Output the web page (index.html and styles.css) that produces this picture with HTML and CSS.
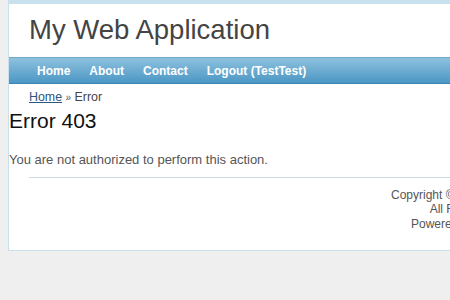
FILE: index.html
```html
<!DOCTYPE html>
<html lang="en">
<head>
  <meta charset="UTF-8" />
  <title>My Web Application - Error</title>
  <link rel="stylesheet" href="styles.css">
</head>
<body>
  <div class="page">
    <div class="header">
      <div class="logo">My Web Application</div>
    </div>

    <div class="mainmenu">
      <ul>
        <li><a href="#">Home</a></li>
        <li><a href="#">About</a></li>
        <li><a href="#">Contact</a></li>
        <li><a href="#">Logout (TestTest)</a></li>
      </ul>
    </div>

    <div class="breadcrumbs">
      <a href="#">Home</a> <span class="sep">&raquo;</span> <span>Error</span>
    </div>

    <h2>Error 403</h2>
    <div class="error">You are not authorized to perform this action.</div>

    <div class="footer">
      Copyright &copy; 2012 by My Company.<br/>
      All Rights Reserved.<br/>
      Powered by <a href="#">Yii Framework</a>.
    </div>
  </div>
</body>
</html>
```

FILE: styles.css
```css
html {
  overflow: hidden;
}

body {
  margin: 0;
  background: #efefef;
  color: #555;
  font: normal 12px 'Liberation Sans', Arial, sans-serif;
}

.page {
  width: 950px;
  margin: 0 0 0 8px;
  background: #fff;
  border: 1px solid #c9e0ed;
}

.header {
  border-top: 3px solid #c9e0ed;
}

.logo {
  padding: 9px 20px 11px;
  font-size: 27.5px;
  line-height: 33px;
  color: #444;
}

.mainmenu {
  height: 25px;
  border-top: 1px solid #72a8ca;
  border-bottom: 1px solid #3f84b0;
  background: linear-gradient(#8ec1de, #4b97c5);
}

.mainmenu ul {
  display: flex;
  gap: 3px;
  list-style: none;
  margin: 0;
  padding: 0 20px;
  height: 100%;
  align-items: center;
}

.mainmenu a {
  display: block;
  padding: 0 8px;
  color: #fff;
  font-weight: bold;
  font-size: 12px;
  text-decoration: none;
}

.breadcrumbs {
  padding: 6px 20px 4px;
  font-size: 12.4px;
  line-height: 14px;
  color: #444;
}

.breadcrumbs a {
  color: #2c5580;
}

.breadcrumbs .sep {
  font-size: 10px;
  color: #555;
}

h2 {
  margin: 0 0 19px;
  font-size: 21px;
  font-weight: normal;
  color: #111;
}

.error {
  margin-bottom: 1px;
  font-size: 13px;
  line-height: 15px;
}

.footer {
  margin: 10px 20px 9px;
  padding: 10px 20px 10px;
  border-top: 1px solid #cbd9e2;
  text-align: center;
  line-height: 14.3px;
  color: #555;
}

.footer a {
  color: #555;
  text-decoration: none;
}
```
